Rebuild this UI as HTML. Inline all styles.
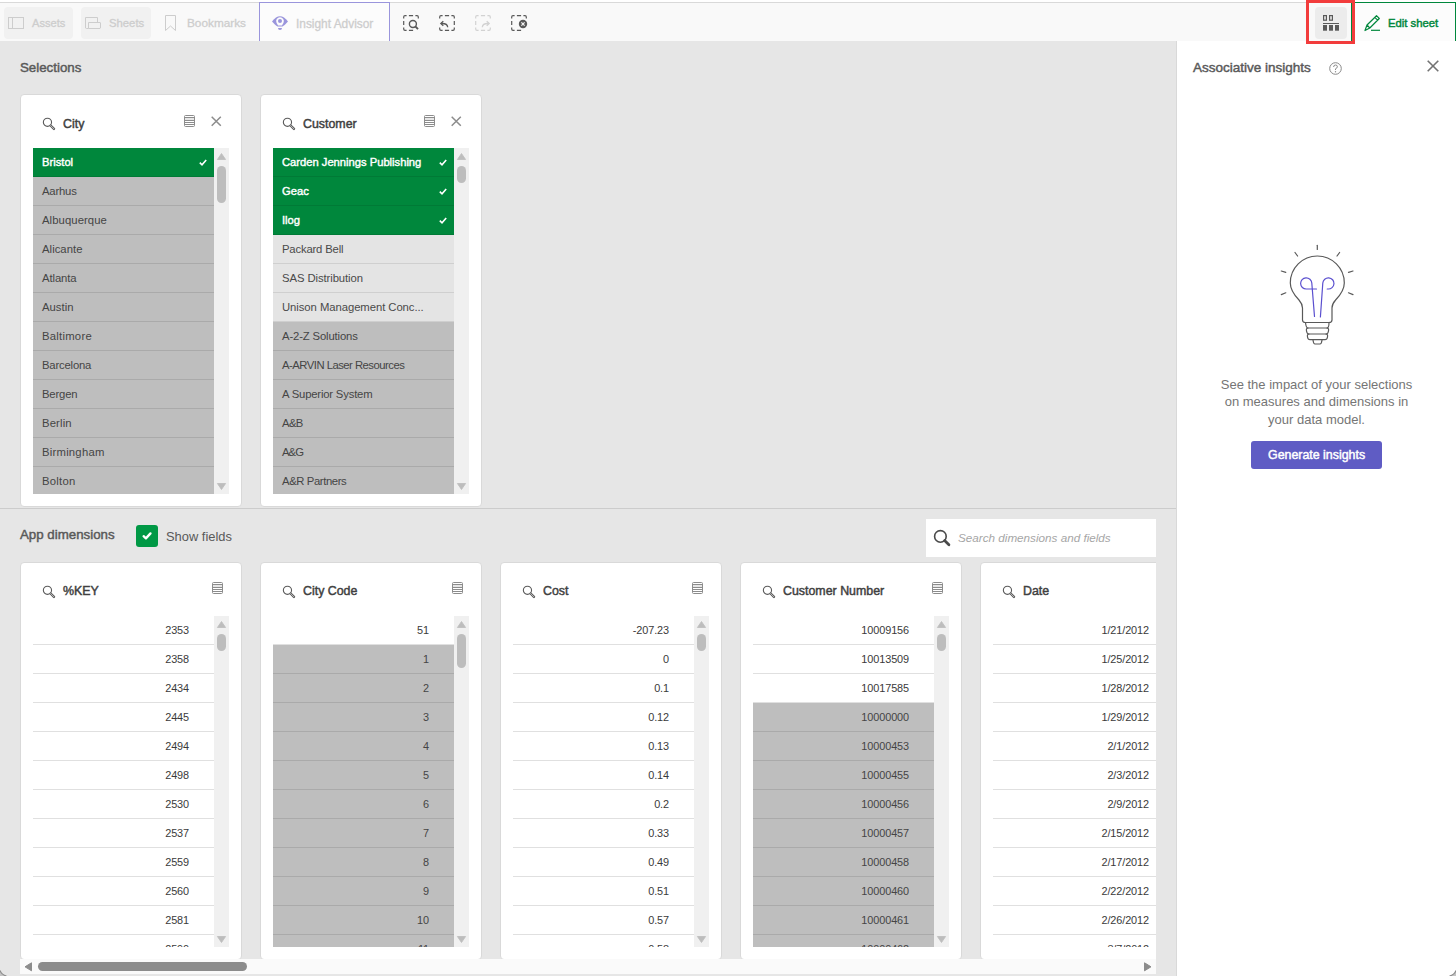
<!DOCTYPE html><html><head><meta charset="utf-8"><title>Insight Advisor</title><style>
*{box-sizing:border-box;margin:0;padding:0}
html,body{width:1456px;height:976px;overflow:hidden}
body{position:relative;background:#e6e6e6;font-family:"Liberation Sans", sans-serif;color:#595959}
.a{position:absolute}
.t{position:absolute;white-space:nowrap;line-height:1}
svg{position:absolute;overflow:visible}
.card{position:absolute;background:#fff;border:1px solid #d9d9d9;border-radius:4px;overflow:hidden}
.row{position:absolute;left:0;height:29px;width:181px;border-bottom:1px solid #e0e0e0;font-size:11.3px;line-height:28px;padding-left:9px;white-space:nowrap;overflow:hidden;color:#4a4a4a}
.row.sel{background:#00873c;color:#fff;font-size:11.2px;-webkit-text-stroke:0.4px #fff;border-bottom-color:#007a36}
.row.exc{background:#bebebe;border-bottom-color:#aaaaaa;color:#454545}
.row.alt{background:#e4e4e4;border-bottom-color:#cfcfcf}
.num{text-align:right;padding-left:0;padding-right:25px;font-size:10.9px;letter-spacing:-0.1px;color:#3a3a3a}
</style></head><body>
<div class="a" style="left:0;top:0;width:1456px;height:2px;background:#fff"></div>
<div class="a" style="left:0;top:2px;width:1456px;height:1px;background:#d9d9d9"></div>
<div class="a" style="left:0;top:3px;width:1456px;height:38px;background:#f9f9f9"></div>
<div class="a" style="left:4px;top:7px;width:69px;height:32px;background:#f1f1f1;border-radius:4px"></div>
<div class="a" style="left:81px;top:7px;width:70px;height:32px;background:#f1f1f1;border-radius:4px"></div>
<svg style="left:8px;top:17px" width="17" height="12"><rect x="0.5" y="0.5" width="15" height="11" fill="none" stroke="#cdcdcd" stroke-width="1"/><line x1="4.5" y1="0.5" x2="4.5" y2="11.5" stroke="#cdcdcd"/></svg>
<div class="t" style="left:32px;top:18px;font-size:11.1px;color:#cdcdcd;-webkit-text-stroke:0.3px #cdcdcd">Assets</div>
<svg style="left:85px;top:17px" width="17" height="12"><path d="M0.5 11 V0.5 H12.5 V5.5 M3.5 11.5 H15 Q15.5 11.5 15.5 10 V6 Q15.5 5.5 15 5.5 H3.5 V11.5 H1.5 Q0.5 11.5 0.5 10.5" fill="none" stroke="#cdcdcd"/></svg>
<div class="t" style="left:109px;top:18px;font-size:11.3px;color:#cdcdcd;-webkit-text-stroke:0.3px #cdcdcd">Sheets</div>
<svg style="left:165px;top:15px" width="12" height="17"><path d="M0.5 15.5 V0.5 H10.5 V15.5 L5.5 11 Z" fill="none" stroke="#cdcdcd"/></svg>
<div class="t" style="left:187px;top:18px;font-size:11.8px;color:#cdcdcd;-webkit-text-stroke:0.3px #cdcdcd">Bookmarks</div>
<div class="a" style="left:259px;top:2px;width:131px;height:39px;border:1px solid #9a95dc;border-bottom:none;background:#fcfcfc"></div>
<svg style="left:272px;top:16px" width="17" height="15" viewBox="0 0 17 15"><path d="M0 5.5 Q8 -5 16 5.5 Q13 9 10.5 10.5 L5.5 10.5 Q3 9 0 5.5 Z" fill="#9a95dc"/><path d="M8 1.3 A3.9 3.9 0 0 1 11.5 6.8 L10 9.6 H6 L4.5 6.8 A3.9 3.9 0 0 1 8 1.3 Z" fill="#fcfcfc"/><circle cx="8" cy="5" r="2" fill="#9a95dc"/><path d="M6 12 H10 Q10 14 8 14 Q6 14 6 12 Z" fill="#9a95dc"/></svg>
<div class="t" style="left:296px;top:19px;font-size:11.9px;color:#cdcdcd;-webkit-text-stroke:0.3px #cdcdcd">Insight Advisor</div>
<svg style="left:403px;top:15px" width="16" height="16"><path d="M0.7 3.6 V2 Q0.7 0.7 2 0.7 H3.6 M5.9 0.7 H10.1 M12.4 0.7 H14 Q15.3 0.7 15.3 2 V3.6 M0.7 5.9 V10.1 M0.7 12.4 V14 Q0.7 15.3 2 15.3 H3.6 M5.9 15.3 H10.1" fill="none" stroke="#595959" stroke-width="1.2"/><circle cx="9.9" cy="9" r="3.5" fill="none" stroke="#595959" stroke-width="1.4"/><line x1="12.3" y1="11.4" x2="15" y2="14.1" stroke="#595959" stroke-width="2"/></svg>
<svg style="left:439px;top:15px" width="16" height="16"><path d="M0.7 3.6 V2 Q0.7 0.7 2 0.7 H3.6 M5.9 0.7 H10.1 M12.4 0.7 H14 Q15.3 0.7 15.3 2 V3.6 M15.3 5.9 V10.1 M0.7 12.4 V14 Q0.7 15.3 2 15.3 H3.6 M5.9 15.3 H10.1 M15.3 12.4 V14 Q15.3 15.3 14 15.3 H12.4" fill="none" stroke="#595959" stroke-width="1.2"/><path d="M8.7 12.2 Q8.5 8.2 2.2 8.5" fill="none" stroke="#595959" stroke-width="1.3"/><path d="M4.3 6.2 L1.8 8.5 L4.3 10.8" fill="none" stroke="#595959" stroke-width="1.3"/></svg>
<svg style="left:475px;top:15px" width="16" height="16"><path d="M0.7 3.6 V2 Q0.7 0.7 2 0.7 H3.6 M5.9 0.7 H10.1 M12.4 0.7 H14 Q15.3 0.7 15.3 2 V3.6 M0.7 5.9 V10.1 M0.7 12.4 V14 Q0.7 15.3 2 15.3 H3.6 M5.9 15.3 H10.1 M15.3 12.4 V14 Q15.3 15.3 14 15.3 H12.4" fill="none" stroke="#d2d2d2" stroke-width="1.2"/><path d="M7.3 12.2 Q7.5 8.2 13.8 8.5" fill="none" stroke="#d2d2d2" stroke-width="1.3"/><path d="M11.7 6.2 L14.2 8.5 L11.7 10.8" fill="none" stroke="#d2d2d2" stroke-width="1.3"/></svg>
<svg style="left:511px;top:15px" width="16" height="16"><path d="M0.7 3.6 V2 Q0.7 0.7 2 0.7 H3.6 M5.9 0.7 H10.1 M12.4 0.7 H14 Q15.3 0.7 15.3 2 V3.6 M0.7 5.9 V10.1 M0.7 12.4 V14 Q0.7 15.3 2 15.3 H3.6 M5.9 15.3 H10.1" fill="none" stroke="#595959" stroke-width="1.2"/><circle cx="12" cy="9" r="4.2" fill="#595959"/><path d="M10.4 7.4 L13.6 10.6 M13.6 7.4 L10.4 10.6" stroke="#f9f9f9" stroke-width="1.2"/></svg>
<div class="a" style="left:1351px;top:2px;width:105px;height:39px;border:1px solid #00873c;border-bottom:none;background:#fcfcfc"></div>
<div class="a" style="left:1315px;top:7px;width:32px;height:32px;background:#ececec;border-radius:4px"></div>
<svg style="left:1323px;top:15px" width="17" height="16"><rect x="0.6" y="0.6" width="2.8" height="4.6" fill="none" stroke="#595959" stroke-width="1.2"/><rect x="6.6" y="0.6" width="2.8" height="4.6" fill="none" stroke="#595959" stroke-width="1.2"/><rect x="0" y="8" width="16" height="1" fill="#595959"/><rect x="0" y="10" width="4" height="5.7" fill="#595959"/><rect x="6" y="10" width="4" height="5.7" fill="#595959"/><rect x="12" y="10" width="4" height="5.7" fill="#595959"/></svg>
<svg style="left:1364px;top:15px" width="17" height="16"><path d="M1 15.5 L3 10 L12.5 0.7 L15.3 3.5 L5.8 13 Z M3 10 L5.8 13 M10.8 2.4 L13.6 5.2" fill="none" stroke="#00873c" stroke-width="1.2" stroke-linejoin="round"/><line x1="7" y1="15.3" x2="16" y2="15.3" stroke="#00873c" stroke-width="1.2"/></svg>
<div class="t" style="left:1388px;top:18px;font-size:11.3px;color:#00873c;-webkit-text-stroke:0.45px #00873c">Edit sheet</div>
<div class="a" style="left:1176px;top:41px;width:1px;height:935px;background:#d9d9d9"></div>
<div class="a" style="left:1177px;top:41px;width:279px;height:935px;background:#fff"></div>
<div class="t" style="left:1193px;top:61px;font-size:13.5px;color:#595959;-webkit-text-stroke:0.45px #595959">Associative insights</div>
<svg style="left:1329px;top:62px" width="13" height="13"><circle cx="6.5" cy="6.5" r="5.8" fill="none" stroke="#8a8a8a" stroke-width="1"/><path d="M4.6 5 Q4.6 3 6.5 3 Q8.4 3 8.4 4.8 Q8.4 5.9 6.5 6.8 V8" fill="none" stroke="#8a8a8a" stroke-width="1"/><circle cx="6.5" cy="9.8" r="0.7" fill="#8a8a8a"/></svg>
<svg style="left:1427px;top:60px" width="12" height="12"><path d="M0.7 0.7 L11.3 11.3 M11.3 0.7 L0.7 11.3" stroke="#737373" stroke-width="1.6"/></svg>
<svg style="left:1270px;top:240px" width="95" height="110" viewBox="0 0 95 110">
<g stroke="#595959" stroke-width="1.2" fill="none" stroke-linecap="round">
<line x1="47.3" y1="5.3" x2="47.3" y2="9.5"/><line x1="25" y1="12.5" x2="27.6" y2="16"/><line x1="69.6" y1="12.5" x2="67" y2="16"/>
<line x1="11.3" y1="31" x2="15.8" y2="32.3"/><line x1="11.3" y1="54.6" x2="15.8" y2="52.8"/>
<line x1="83" y1="31" x2="78.5" y2="32.3"/><line x1="83" y1="54.6" x2="78.5" y2="52.8"/>
<path d="M32.5 80 V68 Q32.5 64 29 60 Q20.3 51 20.3 43 A27 27 0 0 1 74.3 43 Q74.3 51 65.6 60 Q62 64 62 68 V80 Q62 82.5 59 82.5 H35.5 Q32.5 82.5 32.5 80 Z"/>
<path d="M35.5 82.5 Q36 88 38 88 H57 Q59 88 59 82.5"/>
<path d="M38 88 Q36 88 36.5 91 Q37 94 39 94 H56 Q58 94 58.5 91 Q59 88 57 88"/>
<path d="M39 94 Q37 94 37.5 97 Q38 99.7 40 99.7 H55 Q57 99.7 57.5 97 Q58 94 56 94"/>
<path d="M43 100 Q43.5 104 45 104 H50 Q51.5 104 52 100"/>
</g>
<g stroke="#5a4fcf" stroke-width="1.2" fill="none" stroke-linecap="round">
<path d="M44.5 76.5 L41.8 43 A5.6 5.6 0 1 0 36.3 49 H46.5"/>
<path d="M50.4 77 L52.8 43 A5.6 5.6 0 1 1 58 49 H57.2"/>
</g></svg>
<div class="a" style="left:1177px;top:375.5px;width:279px;text-align:center;font-size:13px;line-height:17.7px;color:#757575">See the impact of your selections<br>on measures and dimensions in<br>your data model.</div>
<div class="a" style="left:1251px;top:441px;width:131px;height:28px;background:#5f5cc4;border-radius:3px"></div>
<div class="t" style="left:1268px;top:449px;font-size:12.4px;color:#fff;-webkit-text-stroke:0.45px #fff">Generate insights</div>
<div class="t" style="left:20px;top:61px;font-size:13.3px;color:#595959;-webkit-text-stroke:0.45px #595959">Selections</div>
<div class="card" style="left:20px;top:94px;width:222px;height:413px"></div><svg style="left:43px;top:117px" width="14" height="14"><circle cx="4.45" cy="5.3" r="4.1" fill="none" stroke="#595959" stroke-width="1.1"/><path d="M7.6 8.5 L11 11.9" stroke="#595959" stroke-width="2.4" stroke-linecap="round"/><path d="M7.6 8.5 L11 11.9" stroke="#fff" stroke-width="0.6" stroke-linecap="round"/></svg><div class="t" style="left:63px;top:118px;font-size:12.4px;color:#404040;-webkit-text-stroke:0.45px #404040">City</div><svg style="left:184px;top:115px" width="11" height="13"><rect x="0.5" y="0.5" width="10" height="11" rx="1" fill="none" stroke="#8c8c8c" stroke-width="1"/><rect x="1" y="3" width="9" height="2" fill="#e6e6e6"/><path d="M0.5 2.5 H10.5 M0.5 5.5 H10.5 M0.5 7.5 H10.5 M0.5 9.5 H10.5" stroke="#8c8c8c" stroke-width="1"/></svg><svg style="left:211px;top:116px" width="11" height="11"><path d="M0.7 0.7 L9.8 9.8 M9.8 0.7 L0.7 9.8" stroke="#8c8c8c" stroke-width="1.5"/></svg><div class="a" style="left:33px;top:148px;width:181px;height:346px;overflow:hidden"><div class="row sel" style="top:0px">Bristol<svg style="left:166px;top:11px" width="8" height="7"><path d="M0.8 3.6 L3 5.8 L7.2 1" fill="none" stroke="#fff" stroke-width="1.6"/></svg></div><div class="row exc" style="top:29px;letter-spacing:-0.189px">Aarhus</div><div class="row exc" style="top:58px;letter-spacing:0.081px">Albuquerque</div><div class="row exc" style="top:87px;letter-spacing:0.042px">Alicante</div><div class="row exc" style="top:116px;letter-spacing:-0.098px">Atlanta</div><div class="row exc" style="top:145px;letter-spacing:0.017px">Austin</div><div class="row exc" style="top:174px;letter-spacing:0.246px">Baltimore</div><div class="row exc" style="top:203px;letter-spacing:-0.186px">Barcelona</div><div class="row exc" style="top:232px;letter-spacing:-0.169px">Bergen</div><div class="row exc" style="top:261px;letter-spacing:0.14px">Berlin</div><div class="row exc" style="top:290px;letter-spacing:0.227px">Birmingham</div><div class="row exc" style="top:319px;letter-spacing:0.25px">Bolton</div></div><div class="a" style="left:214px;top:148px;width:15px;height:346px;background:#f0f0f0"></div><svg style="left:217px;top:153px" width="9" height="7"><path d="M4.5 0.5 L8.6 6.5 H0.4 Z" fill="#bdbdbd" stroke="#bdbdbd" stroke-width="0.8" stroke-linejoin="round"/></svg><svg style="left:217px;top:483px" width="9" height="7"><path d="M4.5 6.5 L8.6 0.5 H0.4 Z" fill="#bdbdbd" stroke="#bdbdbd" stroke-width="0.8" stroke-linejoin="round"/></svg><div class="a" style="left:217px;top:166px;width:9px;height:37px;background:#bdbdbd;border-radius:5px"></div>
<div class="card" style="left:260px;top:94px;width:222px;height:413px"></div><svg style="left:283px;top:117px" width="14" height="14"><circle cx="4.45" cy="5.3" r="4.1" fill="none" stroke="#595959" stroke-width="1.1"/><path d="M7.6 8.5 L11 11.9" stroke="#595959" stroke-width="2.4" stroke-linecap="round"/><path d="M7.6 8.5 L11 11.9" stroke="#fff" stroke-width="0.6" stroke-linecap="round"/></svg><div class="t" style="left:303px;top:118px;font-size:12.4px;color:#404040;-webkit-text-stroke:0.45px #404040">Customer</div><svg style="left:424px;top:115px" width="11" height="13"><rect x="0.5" y="0.5" width="10" height="11" rx="1" fill="none" stroke="#8c8c8c" stroke-width="1"/><rect x="1" y="3" width="9" height="2" fill="#e6e6e6"/><path d="M0.5 2.5 H10.5 M0.5 5.5 H10.5 M0.5 7.5 H10.5 M0.5 9.5 H10.5" stroke="#8c8c8c" stroke-width="1"/></svg><svg style="left:451px;top:116px" width="11" height="11"><path d="M0.7 0.7 L9.8 9.8 M9.8 0.7 L0.7 9.8" stroke="#8c8c8c" stroke-width="1.5"/></svg><div class="a" style="left:273px;top:148px;width:181px;height:346px;overflow:hidden"><div class="row sel" style="top:0px">Carden Jennings Publishing<svg style="left:166px;top:11px" width="8" height="7"><path d="M0.8 3.6 L3 5.8 L7.2 1" fill="none" stroke="#fff" stroke-width="1.6"/></svg></div><div class="row sel" style="top:29px">Geac<svg style="left:166px;top:11px" width="8" height="7"><path d="M0.8 3.6 L3 5.8 L7.2 1" fill="none" stroke="#fff" stroke-width="1.6"/></svg></div><div class="row sel" style="top:58px">Ilog<svg style="left:166px;top:11px" width="8" height="7"><path d="M0.8 3.6 L3 5.8 L7.2 1" fill="none" stroke="#fff" stroke-width="1.6"/></svg></div><div class="row alt" style="top:87px;letter-spacing:-0.173px">Packard Bell</div><div class="row alt" style="top:116px;letter-spacing:-0.084px">SAS Distribution</div><div class="row alt" style="top:145px;letter-spacing:-0.06px">Unison Management Conc...</div><div class="row exc" style="top:174px;letter-spacing:-0.143px">A-2-Z Solutions</div><div class="row exc" style="top:203px;letter-spacing:-0.514px">A-ARVIN Laser Resources</div><div class="row exc" style="top:232px;letter-spacing:-0.185px">A Superior System</div><div class="row exc" style="top:261px;letter-spacing:-0.635px">A&amp;B</div><div class="row exc" style="top:290px;letter-spacing:-0.935px">A&amp;G</div><div class="row exc" style="top:319px;letter-spacing:-0.392px">A&amp;R Partners</div></div><div class="a" style="left:454px;top:148px;width:15px;height:346px;background:#f0f0f0"></div><svg style="left:457px;top:153px" width="9" height="7"><path d="M4.5 0.5 L8.6 6.5 H0.4 Z" fill="#bdbdbd" stroke="#bdbdbd" stroke-width="0.8" stroke-linejoin="round"/></svg><svg style="left:457px;top:483px" width="9" height="7"><path d="M4.5 6.5 L8.6 0.5 H0.4 Z" fill="#bdbdbd" stroke="#bdbdbd" stroke-width="0.8" stroke-linejoin="round"/></svg><div class="a" style="left:457px;top:166px;width:9px;height:17px;background:#bdbdbd;border-radius:5px"></div>
<div class="a" style="left:0;top:508px;width:1176px;height:1px;background:#cccccc"></div>
<div class="t" style="left:20px;top:528px;font-size:13.3px;color:#595959;-webkit-text-stroke:0.45px #595959">App dimensions</div>
<div class="a" style="left:136px;top:525px;width:22px;height:22px;background:#009845;border-radius:3px"></div>
<svg style="left:142px;top:531px" width="10" height="10"><path d="M1.6 5.2 L3.9 7.4 L8.5 2.4" fill="none" stroke="#fff" stroke-width="2.3" stroke-linecap="round" stroke-linejoin="round"/></svg>
<div class="t" style="left:166px;top:531px;font-size:12.9px;color:#595959">Show fields</div>
<div class="a" style="left:926px;top:519px;width:230px;height:38px;background:#fff"></div>
<svg style="left:934px;top:530px" width="17" height="17"><circle cx="6.4" cy="6.4" r="5.8" fill="none" stroke="#4a4a4a" stroke-width="1.6"/><path d="M10.6 10.6 L14.9 14.7" stroke="#4a4a4a" stroke-width="2.8" stroke-linecap="round"/></svg>
<div class="t" style="left:958px;top:532px;font-size:11.7px;font-style:italic;color:#a6a6a6">Search dimensions and fields</div>
<div class="a" style="left:0;top:541px;width:1156px;height:418px;overflow:hidden">
<div class="card" style="left:20px;top:21px;width:222px;height:398px"></div><svg style="left:43px;top:44px" width="14" height="14"><circle cx="4.45" cy="5.3" r="4.1" fill="none" stroke="#595959" stroke-width="1.1"/><path d="M7.6 8.5 L11 11.9" stroke="#595959" stroke-width="2.4" stroke-linecap="round"/><path d="M7.6 8.5 L11 11.9" stroke="#fff" stroke-width="0.6" stroke-linecap="round"/></svg><div class="t" style="left:63px;top:44px;font-size:12.4px;color:#404040;-webkit-text-stroke:0.45px #404040">%KEY</div><svg style="left:212px;top:41px" width="11" height="13"><rect x="0.5" y="0.5" width="10" height="11" rx="1" fill="none" stroke="#8c8c8c" stroke-width="1"/><rect x="1" y="3" width="9" height="2" fill="#e6e6e6"/><path d="M0.5 2.5 H10.5 M0.5 5.5 H10.5 M0.5 7.5 H10.5 M0.5 9.5 H10.5" stroke="#8c8c8c" stroke-width="1"/></svg><div class="a" style="left:33px;top:75px;width:181px;height:331px;overflow:hidden"><div class="row num" style="top:0px">2353</div><div class="row num" style="top:29px">2358</div><div class="row num" style="top:58px">2434</div><div class="row num" style="top:87px">2445</div><div class="row num" style="top:116px">2494</div><div class="row num" style="top:145px">2498</div><div class="row num" style="top:174px">2530</div><div class="row num" style="top:203px">2537</div><div class="row num" style="top:232px">2559</div><div class="row num" style="top:261px">2560</div><div class="row num" style="top:290px">2581</div><div class="row num" style="top:319px">2590</div></div><div class="a" style="left:214px;top:75px;width:15px;height:331px;background:#f0f0f0"></div><svg style="left:217px;top:80px" width="9" height="7"><path d="M4.5 0.5 L8.6 6.5 H0.4 Z" fill="#bdbdbd" stroke="#bdbdbd" stroke-width="0.8" stroke-linejoin="round"/></svg><svg style="left:217px;top:395px" width="9" height="7"><path d="M4.5 6.5 L8.6 0.5 H0.4 Z" fill="#bdbdbd" stroke="#bdbdbd" stroke-width="0.8" stroke-linejoin="round"/></svg><div class="a" style="left:217px;top:93px;width:9px;height:17px;background:#bdbdbd;border-radius:5px"></div>
<div class="card" style="left:260px;top:21px;width:222px;height:398px"></div><svg style="left:283px;top:44px" width="14" height="14"><circle cx="4.45" cy="5.3" r="4.1" fill="none" stroke="#595959" stroke-width="1.1"/><path d="M7.6 8.5 L11 11.9" stroke="#595959" stroke-width="2.4" stroke-linecap="round"/><path d="M7.6 8.5 L11 11.9" stroke="#fff" stroke-width="0.6" stroke-linecap="round"/></svg><div class="t" style="left:303px;top:44px;font-size:12.4px;color:#404040;-webkit-text-stroke:0.45px #404040">City Code</div><svg style="left:452px;top:41px" width="11" height="13"><rect x="0.5" y="0.5" width="10" height="11" rx="1" fill="none" stroke="#8c8c8c" stroke-width="1"/><rect x="1" y="3" width="9" height="2" fill="#e6e6e6"/><path d="M0.5 2.5 H10.5 M0.5 5.5 H10.5 M0.5 7.5 H10.5 M0.5 9.5 H10.5" stroke="#8c8c8c" stroke-width="1"/></svg><div class="a" style="left:273px;top:75px;width:181px;height:331px;overflow:hidden"><div class="row num" style="top:0px">51</div><div class="row exc num" style="top:29px">1</div><div class="row exc num" style="top:58px">2</div><div class="row exc num" style="top:87px">3</div><div class="row exc num" style="top:116px">4</div><div class="row exc num" style="top:145px">5</div><div class="row exc num" style="top:174px">6</div><div class="row exc num" style="top:203px">7</div><div class="row exc num" style="top:232px">8</div><div class="row exc num" style="top:261px">9</div><div class="row exc num" style="top:290px">10</div><div class="row exc num" style="top:319px">11</div></div><div class="a" style="left:454px;top:75px;width:15px;height:331px;background:#f0f0f0"></div><svg style="left:457px;top:80px" width="9" height="7"><path d="M4.5 0.5 L8.6 6.5 H0.4 Z" fill="#bdbdbd" stroke="#bdbdbd" stroke-width="0.8" stroke-linejoin="round"/></svg><svg style="left:457px;top:395px" width="9" height="7"><path d="M4.5 6.5 L8.6 0.5 H0.4 Z" fill="#bdbdbd" stroke="#bdbdbd" stroke-width="0.8" stroke-linejoin="round"/></svg><div class="a" style="left:457px;top:93px;width:9px;height:34px;background:#bdbdbd;border-radius:5px"></div>
<div class="card" style="left:500px;top:21px;width:222px;height:398px"></div><svg style="left:523px;top:44px" width="14" height="14"><circle cx="4.45" cy="5.3" r="4.1" fill="none" stroke="#595959" stroke-width="1.1"/><path d="M7.6 8.5 L11 11.9" stroke="#595959" stroke-width="2.4" stroke-linecap="round"/><path d="M7.6 8.5 L11 11.9" stroke="#fff" stroke-width="0.6" stroke-linecap="round"/></svg><div class="t" style="left:543px;top:44px;font-size:12.4px;color:#404040;-webkit-text-stroke:0.45px #404040">Cost</div><svg style="left:692px;top:41px" width="11" height="13"><rect x="0.5" y="0.5" width="10" height="11" rx="1" fill="none" stroke="#8c8c8c" stroke-width="1"/><rect x="1" y="3" width="9" height="2" fill="#e6e6e6"/><path d="M0.5 2.5 H10.5 M0.5 5.5 H10.5 M0.5 7.5 H10.5 M0.5 9.5 H10.5" stroke="#8c8c8c" stroke-width="1"/></svg><div class="a" style="left:513px;top:75px;width:181px;height:331px;overflow:hidden"><div class="row num" style="top:0px">-207.23</div><div class="row num" style="top:29px">0</div><div class="row num" style="top:58px">0.1</div><div class="row num" style="top:87px">0.12</div><div class="row num" style="top:116px">0.13</div><div class="row num" style="top:145px">0.14</div><div class="row num" style="top:174px">0.2</div><div class="row num" style="top:203px">0.33</div><div class="row num" style="top:232px">0.49</div><div class="row num" style="top:261px">0.51</div><div class="row num" style="top:290px">0.57</div><div class="row num" style="top:319px">0.58</div></div><div class="a" style="left:694px;top:75px;width:15px;height:331px;background:#f0f0f0"></div><svg style="left:697px;top:80px" width="9" height="7"><path d="M4.5 0.5 L8.6 6.5 H0.4 Z" fill="#bdbdbd" stroke="#bdbdbd" stroke-width="0.8" stroke-linejoin="round"/></svg><svg style="left:697px;top:395px" width="9" height="7"><path d="M4.5 6.5 L8.6 0.5 H0.4 Z" fill="#bdbdbd" stroke="#bdbdbd" stroke-width="0.8" stroke-linejoin="round"/></svg><div class="a" style="left:697px;top:93px;width:9px;height:17px;background:#bdbdbd;border-radius:5px"></div>
<div class="card" style="left:740px;top:21px;width:222px;height:398px"></div><svg style="left:763px;top:44px" width="14" height="14"><circle cx="4.45" cy="5.3" r="4.1" fill="none" stroke="#595959" stroke-width="1.1"/><path d="M7.6 8.5 L11 11.9" stroke="#595959" stroke-width="2.4" stroke-linecap="round"/><path d="M7.6 8.5 L11 11.9" stroke="#fff" stroke-width="0.6" stroke-linecap="round"/></svg><div class="t" style="left:783px;top:44px;font-size:12.4px;color:#404040;-webkit-text-stroke:0.45px #404040">Customer Number</div><svg style="left:932px;top:41px" width="11" height="13"><rect x="0.5" y="0.5" width="10" height="11" rx="1" fill="none" stroke="#8c8c8c" stroke-width="1"/><rect x="1" y="3" width="9" height="2" fill="#e6e6e6"/><path d="M0.5 2.5 H10.5 M0.5 5.5 H10.5 M0.5 7.5 H10.5 M0.5 9.5 H10.5" stroke="#8c8c8c" stroke-width="1"/></svg><div class="a" style="left:753px;top:75px;width:181px;height:331px;overflow:hidden"><div class="row num" style="top:0px">10009156</div><div class="row num" style="top:29px">10013509</div><div class="row num" style="top:58px">10017585</div><div class="row exc num" style="top:87px">10000000</div><div class="row exc num" style="top:116px">10000453</div><div class="row exc num" style="top:145px">10000455</div><div class="row exc num" style="top:174px">10000456</div><div class="row exc num" style="top:203px">10000457</div><div class="row exc num" style="top:232px">10000458</div><div class="row exc num" style="top:261px">10000460</div><div class="row exc num" style="top:290px">10000461</div><div class="row exc num" style="top:319px">10000462</div></div><div class="a" style="left:934px;top:75px;width:15px;height:331px;background:#f0f0f0"></div><svg style="left:937px;top:80px" width="9" height="7"><path d="M4.5 0.5 L8.6 6.5 H0.4 Z" fill="#bdbdbd" stroke="#bdbdbd" stroke-width="0.8" stroke-linejoin="round"/></svg><svg style="left:937px;top:395px" width="9" height="7"><path d="M4.5 6.5 L8.6 0.5 H0.4 Z" fill="#bdbdbd" stroke="#bdbdbd" stroke-width="0.8" stroke-linejoin="round"/></svg><div class="a" style="left:937px;top:93px;width:9px;height:17px;background:#bdbdbd;border-radius:5px"></div>
<div class="card" style="left:980px;top:21px;width:222px;height:398px"></div><svg style="left:1003px;top:44px" width="14" height="14"><circle cx="4.45" cy="5.3" r="4.1" fill="none" stroke="#595959" stroke-width="1.1"/><path d="M7.6 8.5 L11 11.9" stroke="#595959" stroke-width="2.4" stroke-linecap="round"/><path d="M7.6 8.5 L11 11.9" stroke="#fff" stroke-width="0.6" stroke-linecap="round"/></svg><div class="t" style="left:1023px;top:44px;font-size:12.4px;color:#404040;-webkit-text-stroke:0.45px #404040">Date</div><svg style="left:1172px;top:41px" width="11" height="13"><rect x="0.5" y="0.5" width="10" height="11" rx="1" fill="none" stroke="#8c8c8c" stroke-width="1"/><rect x="1" y="3" width="9" height="2" fill="#e6e6e6"/><path d="M0.5 2.5 H10.5 M0.5 5.5 H10.5 M0.5 7.5 H10.5 M0.5 9.5 H10.5" stroke="#8c8c8c" stroke-width="1"/></svg><div class="a" style="left:993px;top:75px;width:181px;height:331px;overflow:hidden"><div class="row num" style="top:0px">1/21/2012</div><div class="row num" style="top:29px">1/25/2012</div><div class="row num" style="top:58px">1/28/2012</div><div class="row num" style="top:87px">1/29/2012</div><div class="row num" style="top:116px">2/1/2012</div><div class="row num" style="top:145px">2/3/2012</div><div class="row num" style="top:174px">2/9/2012</div><div class="row num" style="top:203px">2/15/2012</div><div class="row num" style="top:232px">2/17/2012</div><div class="row num" style="top:261px">2/22/2012</div><div class="row num" style="top:290px">2/26/2012</div><div class="row num" style="top:319px">3/7/2012</div></div><div class="a" style="left:1174px;top:75px;width:15px;height:331px;background:#f0f0f0"></div><svg style="left:1177px;top:80px" width="9" height="7"><path d="M4.5 0.5 L8.6 6.5 H0.4 Z" fill="#bdbdbd" stroke="#bdbdbd" stroke-width="0.8" stroke-linejoin="round"/></svg><svg style="left:1177px;top:395px" width="9" height="7"><path d="M4.5 6.5 L8.6 0.5 H0.4 Z" fill="#bdbdbd" stroke="#bdbdbd" stroke-width="0.8" stroke-linejoin="round"/></svg><div class="a" style="left:1177px;top:93px;width:9px;height:17px;background:#bdbdbd;border-radius:5px"></div>
</div>
<div class="a" style="left:20px;top:959px;width:1136px;height:15px;background:#fafafa"></div>
<svg style="left:24px;top:962px" width="9" height="10"><path d="M7.5 0.8 V8.8 L1 4.8 Z" fill="#8c8c8c" stroke="#8c8c8c" stroke-width="1" stroke-linejoin="round"/></svg>
<svg style="left:1143px;top:962px" width="9" height="10"><path d="M1.5 0.8 V8.8 L8 4.8 Z" fill="#8c8c8c" stroke="#8c8c8c" stroke-width="1" stroke-linejoin="round"/></svg>
<div class="a" style="left:38px;top:962px;width:209px;height:9px;background:#8c8c8c;border-radius:5px"></div>
<div class="a" style="left:1306px;top:0;width:49px;height:44px;border:3px solid #f23c3c"></div>
<svg style="left:0;top:960px" width="16" height="16"><path d="M0 10.5 A9 9 0 0 0 6.5 16 H0 Z" fill="#c4c4c4"/><path d="M0 10.5 A9 9 0 0 0 6.5 16" fill="none" stroke="#8e8e8e" stroke-width="1.2"/></svg>
<svg style="left:1440px;top:960px" width="16" height="16"><path d="M16 10.5 A9 9 0 0 1 9.5 16 H16 Z" fill="#c4c4c4"/><path d="M16 10.5 A9 9 0 0 1 9.5 16" fill="none" stroke="#8e8e8e" stroke-width="1.2"/></svg>
</body></html>
